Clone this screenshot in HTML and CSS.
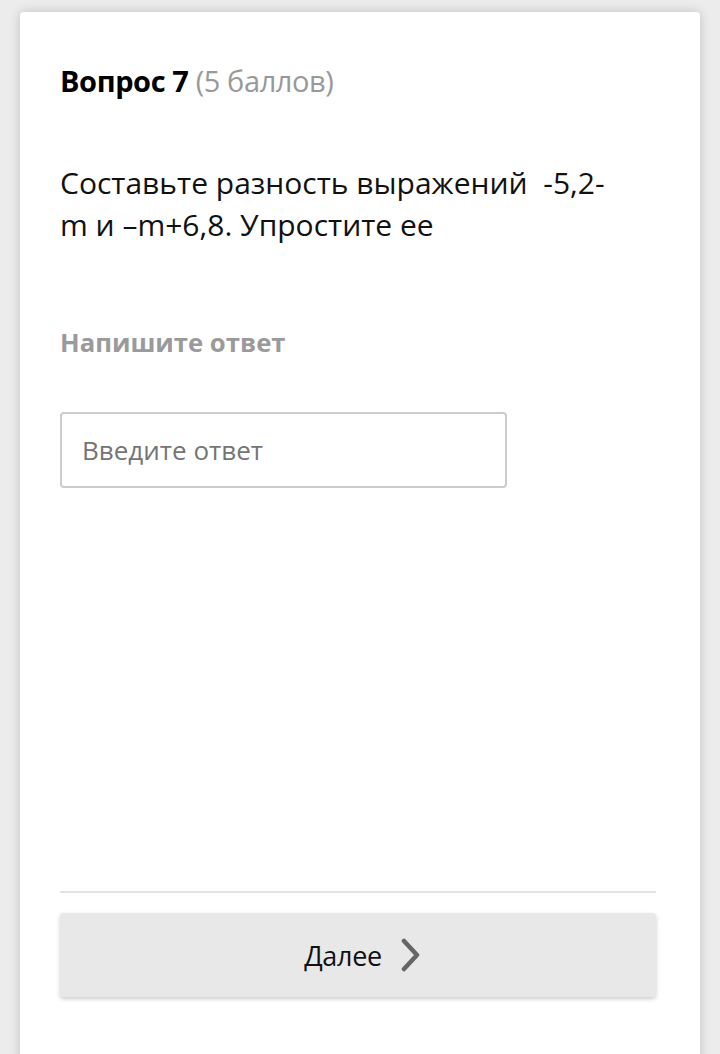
FILE: index.html
```html
<!DOCTYPE html>
<html lang="ru">
<head>
<meta charset="utf-8">
<link rel="stylesheet" href="styles.css">
</head>
<body>
<div class="card">
  <h1 class="title"><span class="num">Вопрос 7</span> <span class="points">(5 баллов)</span></h1>
  <p class="question">Составьте разность выражений&nbsp; -5,2-m и –m+6,8. Упростите ее</p>
  <div class="label">Напишите ответ</div>
  <input class="answer" type="text" placeholder="Введите ответ">
  <div class="spacer"></div>
  <div class="footer">
    <button class="next" type="button"><span>Далее</span>
      <svg class="chev" width="22" height="34" viewBox="0 0 22 34"><path d="M4 3 L17 17 L4 31" fill="none" stroke="#666" stroke-width="4.5" stroke-linecap="round" stroke-linejoin="round"/></svg>
    </button>
  </div>
</div>
</body>
</html>
```

FILE: styles.css
```css
html, body {
  margin: 0;
  padding: 0;
  height: 100%;
}
body {
  background: #ececec;
  font-family: "Open Sans", "Noto Sans", sans-serif;
  overflow: hidden;
}
.card {
  margin: 12px 20px 0 20px;
  background: #fff;
  border-radius: 4px;
  box-shadow: 0 0 12px rgba(0,0,0,0.18);
  padding: 48px 44px 60px 40px;
  min-height: 1100px;
  box-sizing: border-box;
  display: flex;
  flex-direction: column;
}
.title {
  margin: 0;
  font-size: 29px;
  line-height: 42px;
  font-weight: 400;
  letter-spacing: -0.4px;
}
.num {
  font-weight: 700;
  color: #000;
}
.points {
  color: #999;
  font-weight: 400;
}
.question {
  margin: 60px 0 0 0;
  max-width: 560px;
  font-size: 30px;
  line-height: 42px;
  color: #111;
}
.label {
  margin-top: 80px;
  font-size: 25.7px;
  line-height: 34px;
  font-weight: 700;
  color: #9a9a9a;
}
.answer {
  margin-top: 52px;
  width: 447px;
  height: 76px;
  box-sizing: border-box;
  border: 2px solid #cccccc;
  border-radius: 4px;
  padding: 0 20px;
  font-family: "Open Sans", "Noto Sans", sans-serif;
  font-size: 26px;
  color: #333;
  outline: none;
}
.answer::placeholder {
  color: #757575;
}
.spacer {
  height: 403px;
}
.footer {
  border-top: 2px solid #e3e3e3;
  padding-top: 20px;
}
.next {
  width: 100%;
  height: 84px;
  border: none;
  border-radius: 4px;
  background: #e8e8e8;
  box-shadow: 0 2px 4px rgba(0,0,0,0.2);
  display: flex;
  align-items: center;
  justify-content: center;
  gap: 18px;
  font-family: "Open Sans", "Noto Sans", sans-serif;
  font-size: 27px;
  color: #111;
  padding: 0 0 0 10px;
  letter-spacing: -0.3px;
}
.chev {
  display: block;
}
```
